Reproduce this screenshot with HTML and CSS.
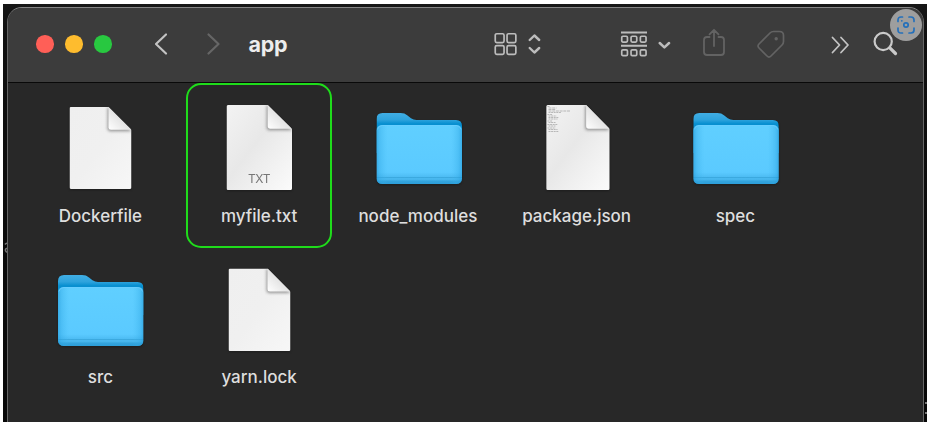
FILE: index.html
```html
<!DOCTYPE html>
<html lang="en">
<head>
<meta charset="utf-8">
<title>app</title>
<link rel="stylesheet" href="styles.css">
</head>
<body>
<svg class="defs" width="0" height="0" aria-hidden="true">
  <defs>
    <linearGradient id="paper" x1="0" y1="0" x2="1" y2="1">
      <stop offset="0" stop-color="#f3f3f3"/><stop offset=".45" stop-color="#e8e8e8"/><stop offset="1" stop-color="#fbfbfb"/>
    </linearGradient>
    <linearGradient id="paper-soft" x1="0" y1="0" x2="1" y2="1">
      <stop offset="0" stop-color="#efefef"/><stop offset=".5" stop-color="#f0f0f0"/><stop offset="1" stop-color="#f7f7f7"/>
    </linearGradient>
    <linearGradient id="fold" x1="0" y1="1" x2=".6" y2=".4">
      <stop offset="0" stop-color="#ffffff"/><stop offset="1" stop-color="#dedede"/>
    </linearGradient>
    <linearGradient id="folder-back" x1="0" y1="0" x2="0" y2="1">
      <stop offset="0" stop-color="#41aee4"/><stop offset=".17" stop-color="#2ea3dd"/><stop offset=".27" stop-color="#078fd0"/><stop offset="1" stop-color="#078fd0"/>
    </linearGradient>
    <linearGradient id="folder-bottom" x1="0" y1="0" x2="0" y2="1">
      <stop offset="0" stop-color="#60cfff"/><stop offset=".8" stop-color="#5bcaff"/><stop offset=".88" stop-color="#4dbcf3"/><stop offset=".89" stop-color="#3ba9df"/><stop offset=".9" stop-color="#4ab9f0"/><stop offset=".935" stop-color="#45b4eb"/><stop offset=".945" stop-color="#35a5de"/><stop offset="1" stop-color="#2c9fda"/>
    </linearGradient>
    <linearGradient id="folder-sides" x1="0" y1="0" x2="1" y2="0">
      <stop offset="0" stop-color="#1e98d8" stop-opacity=".6"/><stop offset=".04" stop-color="#2da5e2" stop-opacity=".35"/><stop offset=".13" stop-color="#40b8f0" stop-opacity="0"/><stop offset=".87" stop-color="#40b8f0" stop-opacity="0"/><stop offset=".96" stop-color="#2da5e2" stop-opacity=".35"/><stop offset="1" stop-color="#1e98d8" stop-opacity=".6"/>
    </linearGradient>
    <filter id="blur" x="-50%" y="-50%" width="200%" height="200%"><feGaussianBlur stdDeviation="1.6"/></filter>
    <clipPath id="page-clip"><path d="M1.5 0H39L62 23.5V81a1.5 1.5 0 0 1-1.5 1.5h-59A1.5 1.5 0 0 1 0 81V1.5A1.5 1.5 0 0 1 1.5 0Z"/></clipPath>
    <symbol id="page" viewBox="0 0 62 82.5" preserveAspectRatio="none">
      <path d="M1.500 0H39L62 23.500V81a1.500 1.500 0 0 1-1.500 1.500h-59A1.500 1.500 0 0 1 0 81V1.500A1.500 1.500 0 0 1 1.500 0Z" fill="url(#paper)"/>
      <g clip-path="url(#page-clip)"><path d="M38 1V21.500q0 3 3 3H62L39 0Z" fill="#777" opacity=".75" filter="url(#blur)"/></g>
      <path d="M39 0V20.500q0 2.500 2.500 2.500H62Z" fill="url(#fold)"/>
    </symbol>
    <symbol id="page-light" viewBox="0 0 62 82.5" preserveAspectRatio="none">
      <path d="M1.500 0H39L62 23.500V81a1.500 1.500 0 0 1-1.500 1.500h-59A1.500 1.500 0 0 1 0 81V1.500A1.500 1.500 0 0 1 1.500 0Z" fill="url(#paper-soft)"/>
      <g clip-path="url(#page-clip)"><path d="M38 1V21.500q0 3 3 3H62L39 0Z" fill="#777" opacity=".75" filter="url(#blur)"/></g>
      <path d="M39 0V20.500q0 2.500 2.500 2.500H62Z" fill="url(#fold)"/>
    </symbol>
    <symbol id="folder" viewBox="0 0 85.5 71">
      <path d="M0 6Q0 0 6 0H24c3 0 5 .8 7 2.500L34.500 5.200Q37 7 40 7H79.500Q85.500 7 85.500 13V40H0Z" fill="url(#folder-back)"/>
      <rect y="12" width="85.500" height="59" rx="5.500" fill="url(#folder-bottom)"/>
      <rect y="12" width="85.500" height="59" rx="5.500" fill="url(#folder-sides)"/>
      <path d="M1 16.500Q1.800 12.500 6 12.500H79.500Q83.700 12.500 84.500 16.500" fill="none" stroke="#6bceff" stroke-width=".8"/>
    </symbol>
  </defs>
</svg>

<div class="desktop">
  <div class="sliver sliver-left"><svg width="4" height="12" viewBox="0 0 4 12" fill="none" stroke="#777" stroke-width="1.500"><path d="M1 2.500Q2 1 4 1.200M4 6Q1 6.500 1.500 8.500 2 10.500 4 10"/></svg></div>
  <main class="window">
    <header class="toolbar">
      <div class="lights"><i class="close"></i><i class="minimize"></i><i class="zoom"></i></div>
      <svg class="nav" width="70" height="24" viewBox="0 0 70 24" fill="none" stroke-width="2.2" stroke-linecap="round" stroke-linejoin="round">
        <path d="M14 2.500 4 12l10 9.500" stroke="#c3c3c3"/><path d="m56.500 2.500 10 9.500-10 9.500" stroke="#666"/>
      </svg>
      <h1 class="title">app</h1>
      <svg class="view" width="48" height="24" viewBox="0 0 48 24" fill="none" stroke="#bcbcbc">
        <g stroke-width="1.700"><rect x="1.250" y="1.750" width="8.800" height="8.800" rx="1.500"/><rect x="13.050" y="1.750" width="8.800" height="8.800" rx="1.500"/><rect x="1.250" y="13.550" width="8.800" height="8.800" rx="1.500"/><rect x="13.050" y="13.550" width="8.800" height="8.800" rx="1.500"/></g>
        <path d="m35.700 8 4.700-4.500L45.200 8M35.700 16l4.700 4.500L45.200 16" stroke-width="2.400" stroke-linecap="round" stroke-linejoin="round"/>
      </svg>
      <svg class="group" width="52" height="26" viewBox="0 0 52 26" fill="none" stroke="#bcbcbc">
        <path d="M1 1.500h26M1 14.800h26" stroke-width="1.900"/>
        <g stroke-width="1.700"><rect x="1.750" y="5.250" width="5.700" height="5.800" rx="1.200"/><rect x="11.050" y="5.250" width="5.700" height="5.800" rx="1.200"/><rect x="20.350" y="5.250" width="5.700" height="5.800" rx="1.200"/><rect x="1.750" y="18.800" width="5.700" height="5.800" rx="1.200"/><rect x="11.050" y="18.800" width="5.700" height="5.800" rx="1.200"/><rect x="20.350" y="18.800" width="5.700" height="5.800" rx="1.200"/></g>
        <path d="m39.700 12 4.700 4.400 4.700-4.400" stroke-width="2.500" stroke-linecap="round" stroke-linejoin="round"/>
      </svg>
      <svg class="share" width="22" height="29" viewBox="0 0 22 29" fill="none" stroke="#636363" stroke-width="1.800" stroke-linecap="round" stroke-linejoin="round">
        <path d="M6.500 9H4Q1 9 1 12V24q0 3 3 3H18q3 0 3-3V12q0-3-3-3H15.500M11 18V2M6.500 6.300 11 1.800l4.500 4.500"/>
      </svg>
      <svg class="tag" width="28" height="28" viewBox="0 0 28 28" fill="none" stroke="#636363" stroke-width="1.700" stroke-linejoin="round">
        <path d="M16.500 1.500h6q4 0 4 4v6q0 2-1.500 3.500L14 26q-2 2-4 0l-8-8q-2-2 0-4L13 3q1.500-1.500 3.500-1.500Z"/><circle cx="19.200" cy="8.700" r="1.700" fill="#636363" stroke="none"/>
      </svg>
      <svg class="more" width="19" height="18" viewBox="0 0 19 18" fill="none" stroke="#c3c3c3" stroke-width="1.800" stroke-linecap="round" stroke-linejoin="round"><path d="m1.500 1.500 7 7.500-7 7.500M10 1.500l7 7.500-7 7.500"/></svg>
      <svg class="search" width="26" height="26" viewBox="0 0 26 26" fill="none" stroke="#cacaca"><circle cx="10.200" cy="10.500" r="8.600" stroke-width="2.200"/><path d="m16.800 16.800 5.700 5.700" stroke-width="3.200" stroke-linecap="round"/></svg>
    </header>
    <section class="files">
      <div class="file"><svg width="90" height="90"><use href="#page-light" x="14.500" y="5" width="62" height="82"/></svg><span>Dockerfile</span></div>
      <div class="file selected"><svg width="90" height="90"><use href="#page" x="12.500" y="3" width="65.500" height="85"/><text class="kind" x="45.200" y="80.500" text-anchor="middle" textLength="22.500">TXT</text></svg><span>myfile.txt</span></div>
      <div class="file"><svg width="90" height="90"><use href="#folder" x="3.500" y="11" width="85.500" height="71"/></svg><span>node_modules</span></div>
      <div class="file"><svg width="90" height="90"><use href="#page" x="14.200" y="3" width="63.500" height="85"/><g fill="none" stroke="#777" stroke-width=".7" opacity=".65"><path d="M15.500 4.500h2M16.500 6h8M16.500 7.500h7M16.500 9h22" stroke-dasharray="3 .7"/><path d="M16.500 10.500h13M15.500 12.500h5M16.500 14h8M16.500 15.500h10M16.500 17h9M15.500 19h5M16.500 20.500h7M15.500 22.500h10M16.500 24h7M15.500 26h8M16.500 27.500h9M16.500 29.500h10" stroke-dasharray="2 .6"/></g></svg><span>package.json</span></div>
      <div class="file"><svg width="90" height="90"><use href="#folder" x="3.300" y="11" width="85.500" height="71"/></svg><span>spec</span></div>
      <div class="file"><svg width="90" height="90"><use href="#folder" x="3" y="11" width="85.500" height="71"/></svg><span>src</span></div>
      <div class="file"><svg width="90" height="90"><use href="#page-light" x="14.500" y="4.500" width="62" height="82.500"/></svg><span>yarn.lock</span></div>
    </section>
  </main>
  <div class="sliver sliver-right"><i></i><i></i></div>
  <div class="lens">
    <svg width="18" height="18" viewBox="0 0 18 18" fill="none" stroke="#2470bb" stroke-width="1.700" stroke-linecap="round"><path d="M1 5.500V4q0-3 3-3h1.500M12 1h2q3 0 3 3v1.500M17 12v2q0 3-3 3h-2M5.500 17H4q-3 0-3-3v-2"/><circle cx="9" cy="9" r="2.200"/><circle cx="4.800" cy="4.800" r=".9" fill="#2470bb" stroke="none"/></svg>
  </div>
</div>
</body>
</html>
```
FILE: styles.css
```css
*, *::after { box-sizing: border-box; }
body { margin: 0; width: 931px; height: 424px; padding: 4px 4px 2px 3px; overflow: hidden; background: #fff; font-family: Inter, "Liberation Sans", sans-serif; }
.defs { position: absolute; }
.desktop { position: relative; display: flex; width: 924px; height: 418px; overflow: hidden; background: linear-gradient(#171717, #101010 30px, #080808); }
.sliver { flex: none; width: 4px; overflow: hidden; }
.sliver-left { padding: 234px 0 0 1px; }
.sliver-right { width: 3px; padding: 398px 0 0 1px; }
.sliver-right i { display: block; height: 2px; margin-bottom: 8px; background: #777; }
.window { flex: none; width: 917px; height: 440px; margin-top: 3px; border: 1px solid #666; border-top-color: #858585; border-radius: 15px; overflow: hidden; background: #282828; }
.toolbar { display: flex; align-items: center; height: 75px; padding: 0 26px 2px 28px; border-bottom: 1px solid #090909; background: #3c3c3c; }
.toolbar svg { flex: none; display: block; }
.lights { display: flex; gap: 11.500px; }
.lights i { width: 17.500px; height: 17.500px; border-radius: 50%; }
.close { background: #ff5f57; }
.minimize { background: #febc2e; }
.zoom { background: #28c840; }
.nav { margin-left: 40px; }
.title { width: 40px; margin: 0 0 0 27px; color: #ededed; font-size: 21.500px; line-height: 30px; font-weight: 700; letter-spacing: -.3px; }
.view { margin-left: 207px; }
.group { margin-left: 78px; }
.share { margin: -3px 0 0 30.500px; }
.tag { margin-left: 32.500px; }
.more { margin: 2px 0 0 45.500px; }
.search { margin-left: 23px; }
.files { display: grid; grid-template-columns: repeat(5, 158.750px); grid-template-rows: 162px 162px; padding-left: 13px; }
.file { position: relative; display: flex; flex-direction: column; align-items: center; padding-top: 19px; color: #dedede; font-size: 17px; line-height: 24px; font-weight: 500; white-space: nowrap; }
.file svg { flex: none; display: block; overflow: visible; filter: drop-shadow(0 1px 1px rgba(0, 0, 0, .3)); }
.file span { margin-top: 12px; }
.file:nth-child(n + 6) span { margin-top: 11px; }
.selected::after { content: ""; position: absolute; top: 0; left: 6.500px; width: 146px; height: 165px; border: 2px solid #1fdc1b; border-radius: 15px; }
.kind { fill: #777; font-size: 12px; font-weight: 400; }
.lens { position: absolute; top: 5px; right: 5px; display: grid; place-items: center; width: 32px; height: 32px; border-radius: 50%; background: #9e9e9e; }
```
